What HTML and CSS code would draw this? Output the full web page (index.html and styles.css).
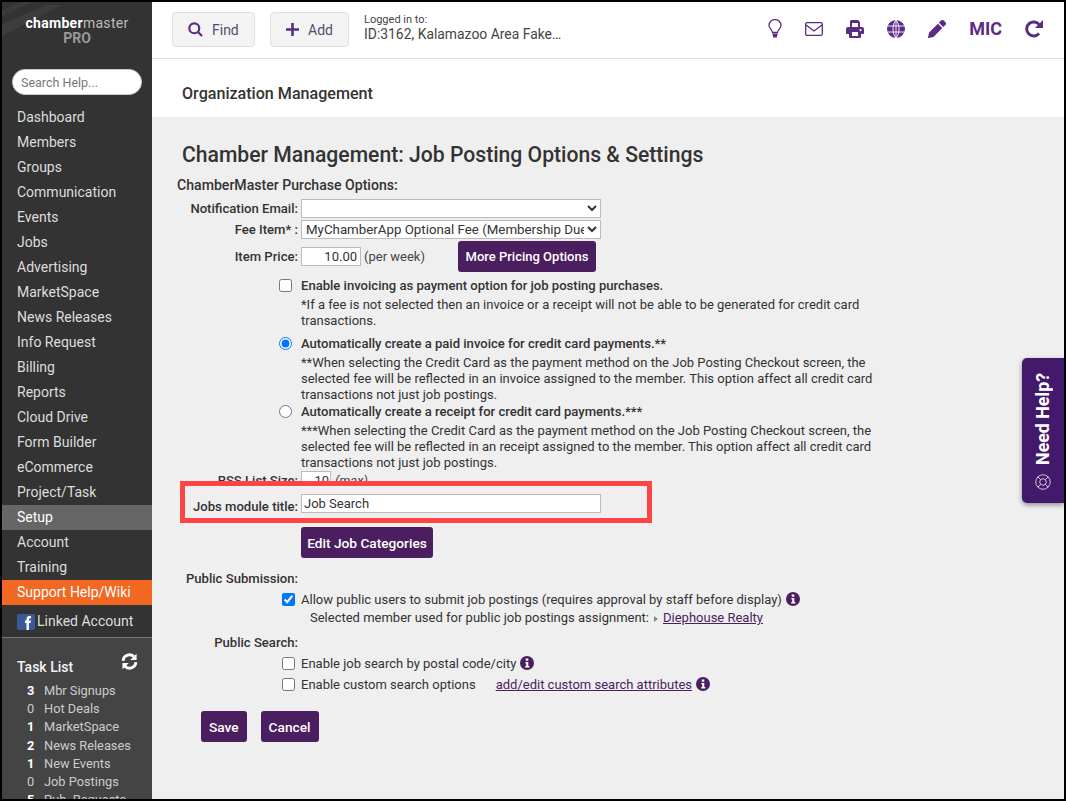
FILE: index.html
```html
<!DOCTYPE html>
<html lang="en">
<head>
<meta charset="utf-8">
<title>Job Posting Options &amp; Settings</title>
<link rel="stylesheet" href="styles.css">
</head>
<body>
<div class="frame">
  <aside class="sidebar">
    <div class="sidetop">
      <svg class="texture" width="70" height="40" viewBox="0 0 70 40"><path d="M0 22 L45 3 L60 3 L0 34Z" fill="#3d3d3d"/><path d="M0 8 L20 0 L30 0 L0 14Z" fill="#3b3b3b"/></svg>
      <div class="logo"><div class="logo1"><b>chamber</b>master</div><div class="logo2">PRO</div></div>
      <input class="helpsearch" type="text" placeholder="Search Help...">
      <nav class="menu">
        <a>Dashboard</a><a>Members</a><a>Groups</a><a>Communication</a><a>Events</a><a>Jobs</a><a>Advertising</a><a>MarketSpace</a><a>News Releases</a><a>Info Request</a><a>Billing</a><a>Reports</a><a>Cloud Drive</a><a>Form Builder</a><a>eCommerce</a><a>Project/Task</a><a class="active">Setup</a><a>Account</a><a>Training</a><a class="support">Support Help/Wiki</a>
      </nav>
      <div class="linked">
        <svg width="18" height="16" viewBox="0 0 18 16"><rect width="18" height="16" rx="2" fill="#3b5998"/><path d="M9.500 16V9H8V6.600h1.500V5c0-2 1.100-3 2.900-3h1.600v2.400h-1.100c-.8 0-1 .4-1 1v1.200h2.100L13.600 9h-1.700v7z" fill="#fff"/></svg>
        <span>Linked Account</span>
      </div>
    </div>
    <div class="tasks">
      <div class="taskhead"><span>Task List</span>
        <svg width="17" height="17" viewBox="0 0 24 24" fill="none" stroke="#fff" stroke-width="4"><path d="M3 11a9 9 0 0 1 16-5"/><path d="M21 13a9 9 0 0 1-16 5"/><path d="M22 1v9h-9z" fill="#fff" stroke="none"/><path d="M2 23v-9h9z" fill="#fff" stroke="none"/></svg>
      </div>
      <ul class="tasklist">
        <li><b>3</b>Mbr Signups</li>
        <li><span class="n">0</span>Hot Deals</li>
        <li><b>1</b>MarketSpace</li>
        <li><b>2</b>News Releases</li>
        <li><b>1</b>New Events</li>
        <li><span class="n">0</span>Job Postings</li>
        <li><b>5</b>Pub. Requests</li>
      </ul>
    </div>
  </aside>
  <div class="main">
    <header class="topbar">
      <button class="tool find"><svg width="15" height="15" viewBox="0 0 16 16" fill="none" stroke="#5b2c83" stroke-width="2.300"><circle cx="6.700" cy="6.700" r="5.300"/><path d="M10.700 10.700L15 15"/></svg><span>Find</span></button>
      <button class="tool add"><svg width="13" height="13" viewBox="0 0 13 13" fill="none" stroke="#5b2c83" stroke-width="2.600"><path d="M6.500 0v13M0 6.500h13"/></svg><span>Add</span></button>
      <div class="logged"><div class="l1">Logged in to:</div><div class="l2">ID:3162, Kalamazoo Area Fake…</div></div>
      <div class="icons">
        <svg width="14" height="19" viewBox="0 0 14 19" fill="none" stroke="#5b2c83" stroke-width="1.300"><path d="M4.500 13.500C4.300 11 1 9.500 1 6.300A6 5.700 0 0 1 13 6.300C13 9.500 9.700 11 9.500 13.500z"/><path d="M4.500 15.500h5M5 17.500h4" stroke-width="1.800"/></svg>
        <svg width="18" height="14" viewBox="0 0 18 14" fill="none" stroke="#5b2c83" stroke-width="1.300"><rect x=".7" y=".7" width="16.600" height="12.600" rx="1.300"/><path d="M1 3l8 6 8-6"/></svg>
        <svg width="18" height="18" viewBox="0 0 18 18" fill="#5b2c83"><path d="M4 7V1.500A1.500 1.500 0 0 1 5.500 0H12l2 2v5h-2V3H6v4zM2 7h14a2 2 0 0 1 2 2v4a1 1 0 0 1-1 1h-2v3a1 1 0 0 1-1 1H4a1 1 0 0 1-1-1v-3H1a1 1 0 0 1-1-1V9a2 2 0 0 1 2-2zm4 9h6v-4H6zM14.500 9a1 1 0 1 0 .01 0z"/></svg>
        <svg width="18" height="18" viewBox="0 0 18 18"><circle cx="9" cy="9" r="9" fill="#5b2c83"/><path d="M0 6h18M0 12h18M9 0v18M9 0C5 4 5 14 9 18M9 0c4 4 4 14 0 18" fill="none" stroke="#fff" stroke-width=".9"/></svg>
        <svg width="18" height="18" viewBox="0 0 18 18" fill="#5b2c83"><path d="M13 .6a2 2 0 0 1 2.800 0l1.600 1.600a2 2 0 0 1 0 2.800L15.300 7.100 10.900 2.700zM9.900 3.700l4.400 4.400L5.500 16.900.6 18a.5.500 0 0 1-.6-.6L1.100 12.500z"/></svg>
        <span class="mic">MIC</span>
        <svg width="18" height="18" viewBox="0 0 18 18" fill="none" stroke="#5b2c83" stroke-width="3"><path d="M14 13.500A7 7 0 1 1 14.500 5"/><path d="M18 0v8h-8z" fill="#5b2c83" stroke="none"/></svg>
      </div>
    </header>
    <div class="band">Organization Management</div>
    <section class="content">
      <h1>Chamber Management: Job Posting Options &amp; Settings</h1>
      <h2 class="group">ChamberMaster Purchase Options:</h2>
      <div class="row r-email"><label class="lab">Notification Email:</label><select class="sel"><option></option></select></div>
      <div class="row r-fee"><label class="lab">Fee Item* :</label><select class="sel"><option>MyChamberApp Optional Fee (Membership Dues)</option></select></div>
      <div class="row r-price"><label class="lab">Item Price:</label>
        <input class="txt price" type="text" value="10.00"><span class="unit">(per week)</span>
        <button class="btn more">More Pricing Options</button></div>
      <div class="opt o1"><input class="chk" type="checkbox"><div><strong>Enable invoicing as payment option for job posting purchases.</strong>
        <p class="n1">*If a fee is not selected then an invoice or a receipt will not be able to be generated for credit card transactions.</p></div></div>
      <div class="opt o2"><input class="chk" type="radio" name="pay" checked><div><strong>Automatically create a paid invoice for credit card payments.**</strong>
        <p>**When selecting the Credit Card as the payment method on the Job Posting Checkout screen, the selected fee will be reflected in an invoice assigned to the member. This option affect all credit card transactions not just job postings.</p></div></div>
      <div class="opt o3"><input class="chk" type="radio" name="pay"><div><strong>Automatically create a receipt for credit card payments.***</strong>
        <p>***When selecting the Credit Card as the payment method on the Job Posting Checkout screen, the selected fee will be reflected in an receipt assigned to the member. This option affect all credit card transactions not just job postings.</p></div></div>
      <div class="row r-rss"><label class="lab">RSS List Size:</label><input class="txt rss" type="text" value="10"><em class="unit">(max)</em></div>
      <div class="row r-title"><label class="lab">Jobs module title:</label><input class="txt title" type="text" value="Job Search"></div>
      <div class="row r-edit"><span class="lab"></span><button class="btn edit">Edit Job Categories</button></div>
      <div class="row r-pub"><label class="lab">Public Submission:</label></div>
      <div class="opt2 a1"><input class="chk2" type="checkbox" checked><span>Allow public users to submit job postings (requires approval by staff before display)</span>
        <svg class="info" width="14" height="14" viewBox="0 0 14 14"><circle cx="7" cy="7" r="7" fill="#4b1e60"/><path d="M5.700 2.600h2.600v2.200H5.700zM5.400 6h2.900v4h1v1.500H5.200V10h1V7.500h-.8z" fill="#fff"/></svg></div>
      <div class="selected">Selected member used for public job postings assignment:<i class="tri"></i><a class="lnk">Diephouse Realty</a></div>
      <div class="row r-search"><label class="lab">Public Search:</label></div>
      <div class="opt2 a2"><input class="chk2" type="checkbox"><span>Enable job search by postal code/city</span>
        <svg class="info" width="14" height="14" viewBox="0 0 14 14"><circle cx="7" cy="7" r="7" fill="#4b1e60"/><path d="M5.700 2.600h2.600v2.200H5.700zM5.400 6h2.900v4h1v1.500H5.200V10h1V7.500h-.8z" fill="#fff"/></svg></div>
      <div class="opt2 a3"><input class="chk2" type="checkbox"><span>Enable custom search options</span><a class="lnk custom">add/edit custom search attributes</a>
        <svg class="info" width="14" height="14" viewBox="0 0 14 14"><circle cx="7" cy="7" r="7" fill="#4b1e60"/><path d="M5.700 2.600h2.600v2.200H5.700zM5.400 6h2.900v4h1v1.500H5.200V10h1V7.500h-.8z" fill="#fff"/></svg></div>
      <div class="actions"><button class="btn">Save</button><button class="btn">Cancel</button></div>
    </section>
  </div>
  <aside class="needhelp">
    <span>Need Help?</span>
    <svg width="16" height="16" viewBox="0 0 17 17" fill="none" stroke="#d9cfe0" stroke-width="1"><circle cx="8.500" cy="8.500" r="7.700"/><circle cx="8.500" cy="8.500" r="3.500"/><path d="M3 3l3 3M14 3l-3 3M3 14l3-3M14 14l-3-3"/></svg>
  </aside>
</div>
</body>
</html>
```
FILE: styles.css
```css
* { box-sizing: border-box; }
html, body { margin: 0; padding: 0; }
body { font-family: Roboto, "Liberation Sans", sans-serif; font-size: 13px; color: #333; }
.frame { position: relative; display: flex; width: 1066px; height: 801px; overflow: hidden; border: 2px solid #000; background: #efefef; }

.sidebar { width: 150px; flex: none; height: 100%; display: flex; flex-direction: column; overflow: hidden; background: #333; }
.sidetop { position: relative; height: 636px; flex: none; padding-top: 14px; border-bottom: 1px solid #777; }
.texture { position: absolute; left: 0; top: 0; }
.logo { position: relative; text-align: center; }
.logo1 { font-size: 14px; line-height: 15px; color: #bbb; letter-spacing: .3px; }
.logo1 b { color: #fff; font-weight: 700; }
.logo2 { font-size: 14px; line-height: 14px; font-weight: 700; color: #999; }
.helpsearch { position: relative; display: block; width: 130px; height: 26px; margin: 24px 0 0 10px; padding: 0 8px; border: 1px solid #ccc; border-radius: 13px; background: #fff; font: 12.500px Roboto, sans-serif; }
.helpsearch::placeholder { color: #777; opacity: 1; }
.menu { display: flex; flex-direction: column; margin-top: 10px; }
.menu a { display: block; height: 25px; padding-left: 15px; font-size: 14px; line-height: 25px; color: #ddd; }
.menu a.active { background: #666; color: #fff; }
.menu a.support { background: #f26722; color: #fff; }
.linked { display: flex; align-items: center; gap: 2px; padding: 8px 0 0 15px; font-size: 14px; line-height: 17px; color: #ddd; }
.tasks { flex: 1; padding: 19px 0 0 15px; background: #444; overflow: hidden; }
.taskhead { display: flex; justify-content: space-between; align-items: flex-start; padding-right: 14px; font-size: 14px; line-height: 20px; font-weight: 500; color: #f2f2f2; }
.taskhead svg { margin-top: -4px; }
.tasklist { list-style: none; margin: 5px 0 0; padding: 0; }
.tasklist li { display: flex; height: 18.200px; font-size: 12.800px; line-height: 18px; color: #ccc; }
.tasklist b, .tasklist .n { width: 17px; margin-left: 10px; flex: none; }
.tasklist b { color: #fff; font-weight: 700; }

.main { flex: 1; min-width: 0; display: flex; flex-direction: column; }
.topbar { display: flex; align-items: center; flex: none; height: 57px; padding: 0 0 1px 20px; background: #fff; border-bottom: 1px solid #ddd; }
.tool { display: flex; align-items: center; height: 35px; margin: 0; border: 1px solid #e0e0e0; border-radius: 4px; background: #f3f3f3; font: 14px Roboto, sans-serif; color: #5b4a70; }
.find { width: 83px; padding: 0 0 0 15px; gap: 9px; }
.add { width: 79px; margin-left: 15px; padding: 0 0 0 15px; gap: 9px; }
.logged { margin: 0 0 5px 15px; color: #444; }
.l1 { font-size: 11px; line-height: 14px; }
.l2 { font-size: 13.900px; line-height: 14px; }
.icons { display: flex; align-items: center; margin: 0 0 2px auto; padding-right: 21px; gap: 23px; }
.mic { font-size: 18px; font-weight: 700; color: #5b2c83; }

.band { flex: none; height: 58px; padding-left: 30px; background: #fff; font-size: 16.100px; font-weight: 500; line-height: 70px; color: #333; }
.content { flex: 1; padding-top: 25px; min-height: 0; }
h1 { margin: 0 0 0 30px; font-size: 21.150px; line-height: 25px; font-weight: 500; color: #333; }
.group { margin: 10px 0 0 25px; font-size: 14.100px; line-height: 16px; font-weight: 500; }
.row { display: flex; align-items: center; gap: 3px; }
.lab { flex: none; width: 146px; text-align: right; font-weight: 500; font-size: 13.100px; color: #333; }
.r-email { margin-top: 6px; }
.r-fee { margin-top: 2px; }
.r-price { margin-top: 2px; height: 31px; }
.sel { width: 300px; height: 19px; padding: 0; border: 1px solid #bbb; background: #fff; font: 13.300px Roboto, sans-serif; color: #333; }
.txt { height: 19px; padding: 0 2px; border: 1px solid #bbb; background: #fff; font: 13px Roboto, sans-serif; color: #333; }
.price { width: 60px; text-align: right; padding-right: 3px; }
.unit { font-size: 13px; color: #444; }
.btn { height: 31px; margin: 0; padding: 0 8px; border: 0; border-radius: 3px; background: #4b1e60; font: 500 13.700px Roboto, sans-serif; color: #fff; }
.more { width: 138px; margin-left: 30px; padding: 0; font-size: 13px; }
.opt { display: flex; margin-left: 127px; width: 600px; line-height: 16px; }
.opt strong { font-weight: 500; font-size: 13.070px; }
.opt p { margin: 3px 0 0; }
.opt p.n1 { margin-top: 3px; }
.chk { flex: none; width: 13px; height: 13px; margin: 1px 9px 0 0; accent-color: #0075ff; }
.o1 { margin-top: 6px; }
.o2 { margin-top: 7px; }
.o3 { margin-top: 1px; }
.r-rss { height: 19px; margin-top: 0; }
.rss { width: 30px; text-align: right; padding-right: 1px; }
.r-rss .unit { margin-left: 1px; }
.r-title { position: relative; width: 472px; height: 42px; margin: -9px 0 0 28px; padding-top: 2px; border: 5px solid #ff4444; background: #efefef; }
.r-title .lab { width: 113px; margin-top: 7px; }
.title { width: 300px; }
.r-edit { margin-top: 4px; }
.edit { width: 132px; padding: 0; }
.r-pub { margin-top: 12px; height: 16px; }
.opt2 { display: flex; align-items: center; height: 16px; margin-left: 130px; }
.chk2 { flex: none; width: 13px; height: 13px; margin: 0 6px 0 0; accent-color: #0075ff; }
.info { flex: none; margin-left: 4px; }
.a1 { margin-top: 5px; }
.selected { margin: 3px 0 0 158px; line-height: 16px; }
.tri { display: inline-block; width: 0; height: 0; margin: 0 5px 0 5px; border-left: 4px solid #888; border-top: 3.500px solid transparent; border-bottom: 3.500px solid transparent; }
.lnk { color: #4b1e60; text-decoration: underline; }
.custom { margin-left: 20px; }
.r-search { margin-top: 8px; height: 16px; }
.a2 { margin-top: 5px; }
.a3 { margin-top: 5px; }
.actions { display: flex; gap: 14px; margin: 19px 0 0 49px; }

.needhelp { position: absolute; right: 0; top: 356px; display: flex; flex-direction: column; align-items: center; width: 42px; height: 145px; padding-top: 15px; border-radius: 5px 0 0 5px; background: #43196b; box-shadow: 0 2px 5px rgba(0,0,0,.4); }
.needhelp span { writing-mode: vertical-rl; transform: rotate(180deg); margin-bottom: 9px; font-size: 17.800px; font-weight: 700; line-height: 20px; color: #fff; }
```
